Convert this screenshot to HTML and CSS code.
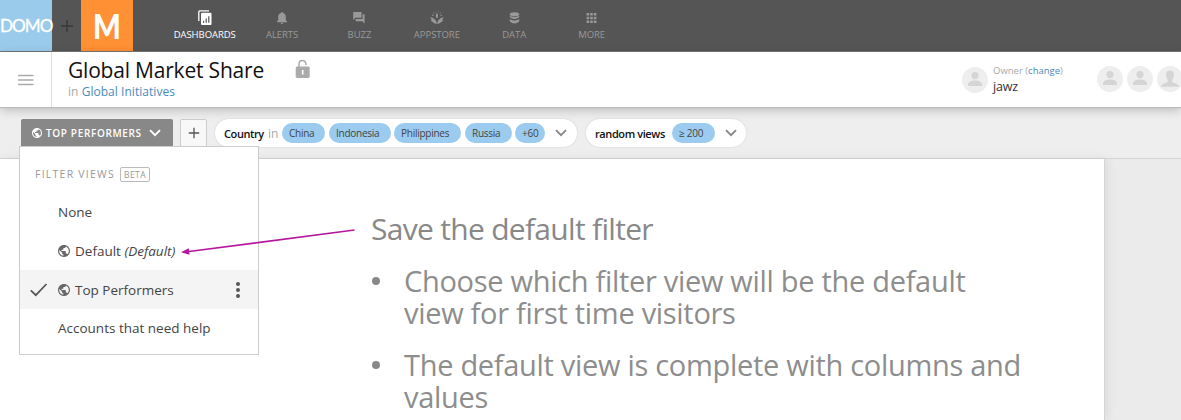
FILE: index.html
```html
<!DOCTYPE html>
<html lang="en">
<head>
<meta charset="utf-8">
<title>Global Market Share</title>
<link rel="stylesheet" href="styles.css">
</head>
<body>
<svg class="defs" width="0" height="0" aria-hidden="true">
  <symbol id="globe" viewBox="2 2 20 20"><path d="M12 2C6.48 2 2 6.48 2 12s4.48 10 10 10 10-4.48 10-10S17.52 2 12 2zm-1 17.93c-3.95-.49-7-3.85-7-7.93 0-.62.08-1.21.21-1.79L9 15v1c0 1.1.9 2 2 2v1.93zm6.9-2.54c-.26-.81-1-1.39-1.9-1.39h-1v-3c0-.55-.45-1-1-1H8v-2h2c.55 0 1-.45 1-1V7h2c1.100 0 2-.9 2-2v-.41c2.930 1.190 5 4.060 5 7.410 0 2.080-.8 3.970-2.100 5.390z" fill="currentColor"/></symbol>
  <symbol id="person" viewBox="0 0 26 26"><circle cx="13" cy="8.600" r="3.600"/><path d="M6 19v-1.800c0-2.300 3.600-3.700 7-3.700s7 1.400 7 3.700V19z"/></symbol>
  <symbol id="chevron" viewBox="0 0 12 8"><path d="M1 1.200l5 5 5-5" fill="none" stroke="currentColor" stroke-width="1.900"/></symbol>
</svg>

<header class="topbar">
  <div class="brand"><span>DOMO</span></div>
  <div class="add"><svg width="14" height="14"><path d="M7 1v12M1 7h12" stroke="#383838" stroke-width="1.400"/></svg></div>
  <div class="company"><span>M</span></div>
  <nav class="nav">
    <a class="nav-item active">
      <svg width="14" height="16" viewBox="0 0 14 16"><path d="M.8 11V1.700Q.8.800 1.700.8H11" fill="none" stroke="#fff" stroke-width="1.300"/><rect x="3" y="2.800" width="10.500" height="12.200" rx="1" fill="#fff"/><path d="M5.600 12.800v-2M8.200 12.800V8.600M10.800 12.800V6.300" stroke="#555" stroke-width="1.200"/></svg>
      <span>DASHBOARDS</span></a>
    <a class="nav-item">
      <svg width="12" height="16" viewBox="0 0 12 16"><path d="M6 2q.9 0 .9 1C9 3.500 9.800 5 9.800 7v3.200l1.300 1.400v.6H.9v-.6l1.300-1.400V7c0-2 .8-3.500 2.900-4Q5.100 2 6 2zM4.600 12.800h2.800q-.3 1.200-1.400 1.200t-1.400-1.200z" fill="#999"/></svg>
      <span>ALERTS</span></a>
    <a class="nav-item">
      <svg width="12" height="16" viewBox="0 0 12 16"><path d="M.7 2h7.800v5.800H2.400L.2 10V2.500Q.2 2 .7 2z" fill="#999"/><path d="M9.600 4.200h1.300q.7 0 .7.700v8.500l-2.300-2.200H3.200q-.6 0-.6-.6V9h7z" fill="#999"/></svg>
      <span>BUZZ</span></a>
    <a class="nav-item">
      <svg width="14" height="16" viewBox="0 0 14 16"><g fill="#999"><path d="M7 2.700Q9 5 7.600 8H6.400Q5 5 7 2.700z"/><path d="M.3 7.500q3-.5 4.300 2Q6.500 10 6.700 14q-3-.3-4.200-2.200Q.8 11 .8 9.700l1.700.2Q.5 9 .3 7.500zM13.700 7.500q-3-.5-4.300 2Q7.500 10 7.300 14q3-.3 4.200-2.200 1.700-.8 1.700-2.100l-1.700.2q2-.9 2.200-2.400z"/><circle cx="3.800" cy="3" r=".6"/><circle cx="10.200" cy="3" r=".6"/><circle cx="2.800" cy="5.300" r=".7"/><circle cx="11.200" cy="5.300" r=".7"/><circle cx="5.600" cy="1.200" r=".4"/><circle cx="8.400" cy="1.200" r=".4"/></g></svg>
      <span>APPSTORE</span></a>
    <a class="nav-item">
      <svg width="11" height="16" viewBox="0 0 11 16"><g fill="#999"><ellipse cx="5.500" cy="4.200" rx="4.700" ry="2"/><path d="M.8 5.800q4.700 2.600 9.400 0v1.500q-4.700 3.400-9.400 0zM.8 9q4.700 3 9.400 0v2.500q-4.700 3.800-9.400 0z"/></g></svg>
      <span>DATA</span></a>
    <a class="nav-item">
      <svg width="11" height="16" viewBox="0 0 11 16"><path d="M.6 4.300h9.800M.6 8h9.800M.6 11.700h9.800" stroke="#999" stroke-width="2.500" stroke-dasharray="2.600 1"/></svg>
      <span>MORE</span></a>
  </nav>
</header>

<section class="pagehead">
  <div class="burger"><svg width="16" height="12"><path d="M0 1.500h15.500M0 6h15.500M0 10.500h15.500" stroke="#aaa" stroke-width="1.300"/></svg></div>
  <div class="titles">
    <h1>Global Market Share</h1>
    <p>in <a>Global Initiatives</a></p>
  </div>
  <svg class="lock" width="16" height="20" viewBox="0 0 16 20"><path d="M4 8V5.100Q4 1.400 7.300 1.400T10.900 5v1" fill="none" stroke="#aaa" stroke-width="1.500"/><rect x=".7" y="7.600" width="14" height="11.400" rx="1.400" fill="#aaa"/><path d="M7.700 11v4.500" stroke="#fff" stroke-width="1.600"/></svg>
  <div class="owner">
    <svg class="avatar"><use href="#person"/></svg>
    <div><p class="owner-label">Owner (<a>change</a>)</p><p class="owner-name">jawz</p></div>
  </div>
  <div class="people">
    <svg class="avatar"><use href="#person"/></svg>
    <svg class="avatar"><use href="#person"/></svg>
    <svg class="avatar"><path d="M13 4.500q4 0 4 4.200 0 3-1.800 5v2q.2.800 3 1.600 3.500 1 3.900 3.500H3.900q.4-2.500 3.900-3.500 2.800-.8 3-1.600v-2Q9 11.700 9 8.700q0-4.200 4-4.200z"/></svg>
  </div>
</section>

<section class="filterbar">
  <div class="view-btn">
    <svg class="globe"><use href="#globe"/></svg><span>TOP PERFORMERS</span><svg class="chev"><use href="#chevron"/></svg>
    <div class="menu">
      <div class="menu-head"><span>FILTER VIEWS</span><b>BETA</b></div>
      <div class="row"><span>None</span></div>
      <div class="row"><svg class="globe"><use href="#globe"/></svg><span>Default <i>(Default)</i></span></div>
      <div class="row selected"><svg class="check" width="18" height="14"><path d="M.8 7.300l5 4.900L16.500 1" fill="none" stroke="#555" stroke-width="1.700"/></svg><svg class="globe"><use href="#globe"/></svg><span>Top Performers</span><svg class="dots" width="4" height="18"><circle cx="2" cy="3" r="2"/><circle cx="2" cy="9" r="2"/><circle cx="2" cy="15" r="2"/></svg></div>
      <div class="row"><span>Accounts that need help</span></div>
    </div>
  </div>
  <div class="plus-btn"><svg width="12" height="12"><path d="M6 .8v10.400M.8 6h10.400" stroke="#555" stroke-width="1.300"/></svg></div>
  <div class="filter country">
    <strong>Country</strong><em>in</em>
    <span class="pill p1">China</span><span class="pill p2">Indonesia</span><span class="pill p3">Philippines</span><span class="pill p4">Russia</span><span class="pill p5">+60</span>
    <svg class="chev"><use href="#chevron"/></svg>
  </div>
  <div class="filter random">
    <strong>random views</strong><span class="pill p6">≥ 200</span>
    <svg class="chev"><use href="#chevron"/></svg>
  </div>
</section>

<main class="content">
  <article class="sheet">
    <h2>Save the default filter</h2>
    <ul>
      <li>Choose which filter view will be the default<br>view for first time visitors</li>
      <li>The default view is complete with columns and<br>values</li>
    </ul>
  </article>
</main>
<svg class="arrow" width="176" height="30"><path d="M174.500 1L9 22.500" stroke="#b5179e" stroke-width="1.700"/><path d="M1 23.300l7.700-4.100.9 6.600z" fill="#b5179e"/></svg>
</body>
</html>
```
FILE: styles.css
```css
* { box-sizing: border-box; }
body { margin: 0; width: 1181px; height: 420px; overflow: hidden; position: relative; font-family: "Open Sans", sans-serif; color: #444; background: #ebebeb; white-space: nowrap; }
h1, h2, p, ul { margin: 0; padding: 0; font-weight: 400; }
svg { display: block; flex: none; }
.defs { position: absolute; }
a { color: #4a8aba; }

.topbar { height: 52px; background: #555; border-bottom: 1px solid #777; display: flex; }
.brand { width: 52px; background: #9bcbeb; color: #fff; font: 400 18px/51px Lato, sans-serif; letter-spacing: -1px; display: flex; -webkit-text-stroke: .3px #fff; }
.brand span { display: block; transform: scaleX(.95); transform-origin: 0 50%; }
.add { width: 29px; display: grid; place-items: center; }
.company { width: 52px; background: #ff9033; color: #fff; font: 900 34px/51px Lato, sans-serif; text-align: center; }
.company span { display: block; transform: scaleX(.86); }
.nav { display: flex; margin-left: 33px; }
.nav-item { width: 77.400px; display: flex; flex-direction: column; align-items: center; padding-top: 10px; color: #999; font-size: 9.500px; line-height: 14px; letter-spacing: -.05px; }
.nav-item span { margin-top: 2px; }
.nav-item svg { margin-top: 0; }
.nav-item.active { color: #fff; }

.pagehead { height: 55px; background: #fff; display: flex; position: relative; z-index: 2; box-shadow: 0 1px 1px #bbb, 0 3px 10px rgba(0,0,0,.22); }
.burger { width: 52px; border-right: 1px solid #ddd; display: grid; place-items: center; }
.titles { padding: 5px 0 0 16px; width: 243px; }
h1 { color: #111; font-size: 21px; line-height: 27px; letter-spacing: -.2px; }
.titles p { color: #aaa; font-size: 12px; line-height: 16px; letter-spacing: .04px; }
.lock { margin-top: 7px; }
.owner { margin-left: auto; display: flex; gap: 5px; padding-top: 12px; width: 135px; }
.avatar { width: 26px; height: 26px; border-radius: 50%; background: #eee; fill: #d5d5d5; }
.owner .avatar { margin-top: 3px; }
.owner-label { font-size: 9.500px; line-height: 14px; color: #aaa; }
.owner-name { font-size: 12.500px; line-height: 17px; color: #333; letter-spacing: -.2px; }
.people { display: flex; gap: 4px; padding-top: 14px; width: 84px; overflow: hidden; }

.filterbar { height: 52px; background: #eee; border-bottom: 1px solid #d5d5d5; display: flex; align-items: flex-start; padding: 12px 0 0 21px; }
.view-btn { width: 152px; height: 27px; background: #888; border-radius: 2px 2px 0 0; color: #fff; display: flex; align-items: center; position: relative; padding-left: 11px; font-size: 10px; font-weight: 600; letter-spacing: .65px; }
.view-btn > span { width: 103px; }
.view-btn > .globe { width: 10px; height: 10px; margin-right: 4px; }
.view-btn > .chev { width: 12px; height: 8px; }
.plus-btn { width: 27px; height: 28px; margin-left: 7px; background: #f8f8f8; border: 1px solid #ccc; border-radius: 2px; display: grid; place-items: center; }
.filter { height: 28px; border-radius: 14px; background: #fff; box-shadow: 0 0 2px #ccc; display: flex; align-items: center; font-size: 11px; letter-spacing: -.1px; }
.filter strong { color: #111; font-weight: 600; letter-spacing: -.4px; }
.country { width: 362px; margin-left: 8px; padding-left: 9px; }
.country strong { width: 44px; }
.country em { font-style: normal; font-size: 12px; color: #aaa; width: 14px; letter-spacing: 0; }
.random { width: 160px; margin-left: 9px; padding-left: 9px; }
.random strong { width: 77px; }
.pill { height: 20px; border-radius: 10px; background: #9bcbee; color: #444; font-size: 10px; line-height: 20px; padding-left: 7px; margin-right: 4px; letter-spacing: -.25px; }
.p1 { width: 43px; } .p2 { width: 62px; margin-right: 3px; } .p3 { width: 67px; } .p4 { width: 47px; margin-right: 3px; } .p5 { width: 30px; } .p6 { width: 43px; }
.filter .chev { width: 12px; height: 8px; margin-left: 6px; color: #888; }

.menu { position: absolute; z-index: 5; left: -2px; top: 27px; width: 240px; height: 209px; background: #fff; border: 1px solid #ccc; color: #444; font-size: 13.500px; font-weight: 400; letter-spacing: 0; padding-top: 18px; }
.menu-head { display: flex; gap: 5px; align-items: center; padding-left: 15px; height: 18px; color: #999; font-size: 10.500px; letter-spacing: 1.240px; margin-bottom: 10px; }
.menu-head b { font-size: 8.500px; font-weight: 400; letter-spacing: .4px; line-height: 13px; width: 30px; text-align: center; border: 1px solid #bbb; border-radius: 2px; }
.row { height: 38.700px; display: flex; align-items: center; padding-left: 38px; position: relative; }
.row .globe { width: 12px; height: 12px; margin-right: 5px; color: #666; }
.selected { background: #f4f4f4; }
.check { position: absolute; left: 10px; }
.dots { position: absolute; left: 216px; fill: #555; }

.content { height: 261px; }
.sheet { width: 1104px; height: 261px; padding: 54px 0 0 371px; background: #fff; box-shadow: 1px 0 0 #d5d5d5, 3px 0 10px rgba(0,0,0,.08); color: #888; font-weight: 300; font-size: 29px; line-height: 32px; }
h2 { font-size: 30px; font-weight: 400; line-height: 32px; letter-spacing: -.7px; }
ul { list-style: none; }
li { padding-left: 33px; margin-top: 20px; position: relative; letter-spacing: -.3px; color: #8d8d8d; }
li::before { content: ""; position: absolute; left: 1px; top: 12px; width: 8px; height: 8px; border-radius: 50%; background: #888; }
.arrow { position: absolute; z-index: 10; left: 180px; top: 229px; }
```
